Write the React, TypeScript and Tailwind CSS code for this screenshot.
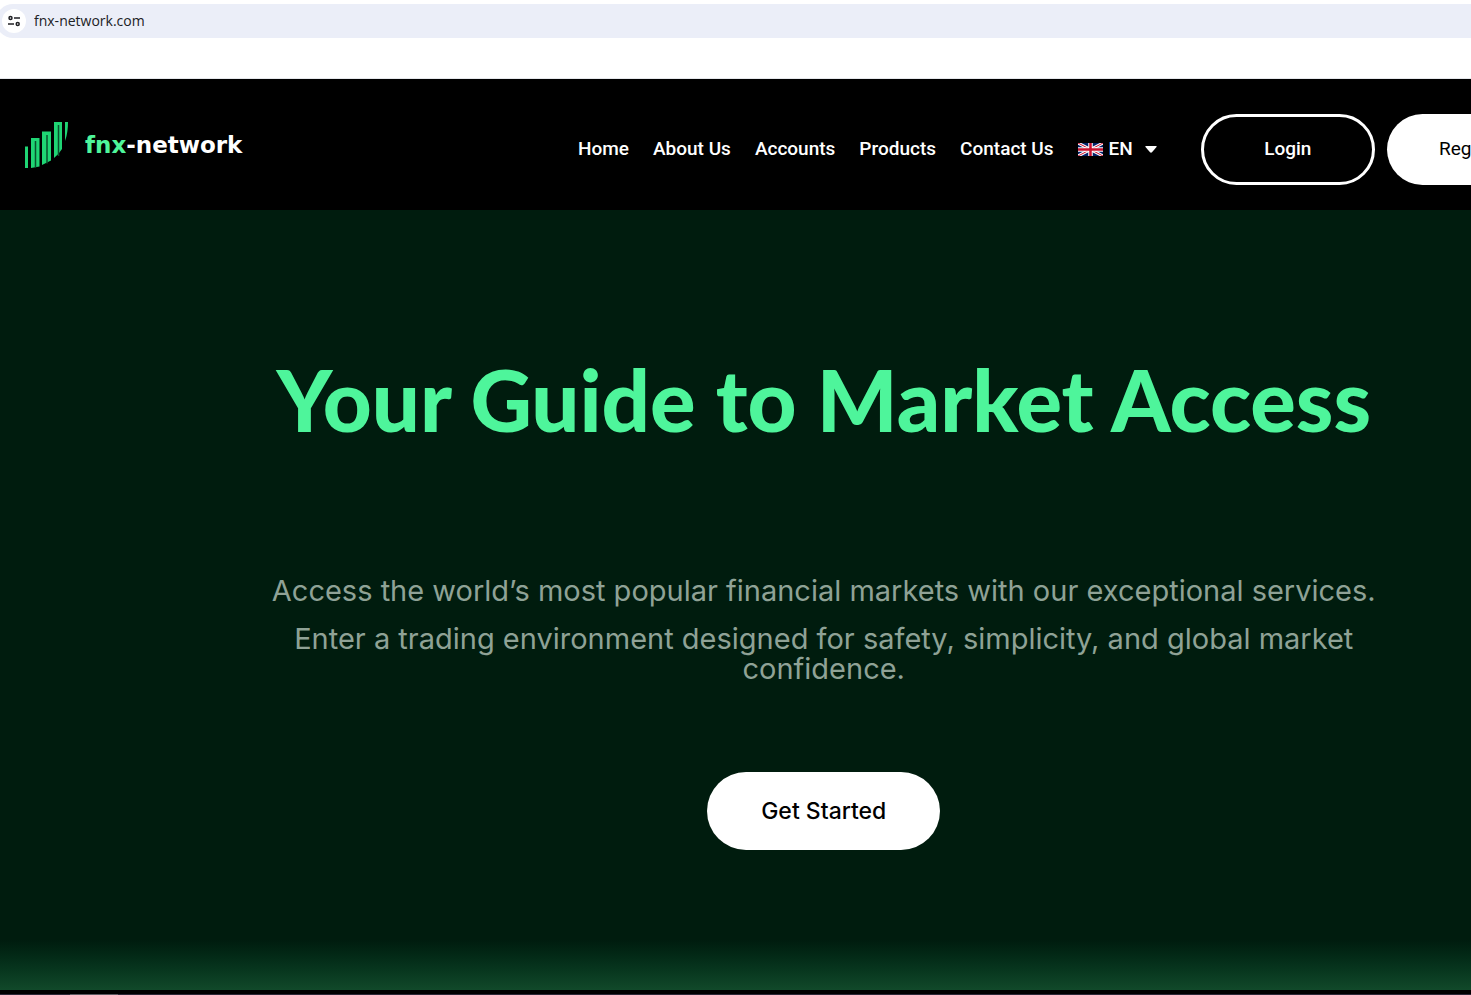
const NAV_LINKS = ["Home", "About Us", "Accounts", "Products", "Contact Us"];

export default function App() {
  return (
    <div className="flex min-h-screen flex-col overflow-hidden bg-white">
      <AddressBar />
      <div className="flex w-[112%] flex-1 flex-col">
        <Header />
        <Hero />
      </div>
      <BottomStrip />
    </div>
  );
}

function AddressBar() {
  return (
    <div className="-ml-1 border-b border-gray-200 pt-1 pb-10">
      <div className="flex h-[34px] items-center gap-2 rounded-l-full bg-[#ebeef8] pl-1.5">
        <button
          aria-label="View site information"
          className="flex size-6 items-center justify-center rounded-full bg-white"
        >
          <SiteInfoIcon />
        </button>
        <input
          aria-label="Address"
          defaultValue="fnx-network.com"
          className="flex-1 bg-transparent font-['Open_Sans',sans-serif] text-sm text-[#202124] outline-none"
        />
      </div>
    </div>
  );
}

function Header() {
  return (
    <header className="flex h-[131px] items-center bg-black pt-2.5 pl-6 font-['Roboto',sans-serif] text-[19px] font-medium text-white">
      <a href="#" className="mb-2.5 flex w-[554px] items-center gap-4">
        <Logo />
        <span className="pt-0.5 font-['DejaVu_Sans',sans-serif] text-[23px] font-bold">
          <span className="text-[#4ef59b]">fnx</span>-network
        </span>
      </a>
      <nav className="flex items-center gap-6 whitespace-nowrap">
        {NAV_LINKS.map((label) => (
          <a key={label} href="#">
            {label}
          </a>
        ))}
        <button className="flex items-center gap-1.5">
          <Flag />
          EN
          <svg viewBox="0 0 12 7" className="ml-1.5 h-[7px] w-3" fill="currentColor">
            <path d="M1 0h10q1.300 0 .5 1L7 6.300q-1 .9-2 0L.5 1Q-.3 0 1 0z" />
          </svg>
        </button>
      </nav>
      <div className="ml-11 flex gap-3">
        <button className="h-[71px] w-[174px] rounded-full border-3 border-white">Login</button>
        <button className="h-[71px] w-[174px] rounded-full bg-white font-normal text-black">Register</button>
      </div>
    </header>
  );
}

function Hero() {
  return (
    <main className="flex flex-1 flex-col items-center bg-[#001c0e] text-center">
      <h1 className="mt-[133px] font-['Lato',sans-serif] text-[85px] leading-[112px] font-black whitespace-nowrap text-[#4ef59b]">
        Your Guide to Market Access
      </h1>
      <div className="mt-[121px] flex w-[1140px] flex-col gap-[18px] font-['Inter',sans-serif] text-[29px] leading-[30px] text-[#8fa296]">
        <p>Access the world’s most popular financial markets with our exceptional services.</p>
        <p>Enter a trading environment designed for safety, simplicity, and global market confidence.</p>
      </div>
      <button className="mt-[88px] h-[78px] w-[233px] rounded-full bg-white font-['Inter',sans-serif] text-[23px] font-medium text-black">
        Get Started
      </button>
      <div className="mt-auto h-[50px] w-full bg-linear-to-b from-[#001c0e] to-[#11492a]" />
    </main>
  );
}

function BottomStrip() {
  return (
    <div className="bg-black pt-1">
      <div className="h-px bg-[#2c2838] pl-[70px]">
        <div className="h-px w-12 bg-[#5c5a62]" />
      </div>
    </div>
  );
}

function SiteInfoIcon() {
  return (
    <svg viewBox="0 0 12 12" className="size-3" fill="none" stroke="#202124" strokeWidth="1.500">
      <circle cx="2.500" cy="3" r="1.500" />
      <path d="M6 3h6M0 9h6" />
      <circle cx="9.700" cy="9" r="1.500" />
    </svg>
  );
}

function Logo() {
  return (
    <svg viewBox="0 0 45 48" className="h-12 w-[45px]">
      <g fill="#1fd574">
        <path d="M1 25.500h3V47H1z" />
        <path d="M7 17h8.500v28.500L7 47z" />
        <path d="M18 10.500h9v29L18 44z" />
        <path d="M30 1h8v27q-3 5-8 9z" />
        <path d="M41 1h3q0 11-3 19z" />
      </g>
      <path d="M11.500 20v26.500M23 14v28.500M34.500 4v31" stroke="#08522c" strokeWidth="1.500" />
    </svg>
  );
}

function Flag() {
  return (
    <svg viewBox="0 0 50 26" className="h-[13px] w-[25px]">
      <path fill="#012169" d="M0 0h50v26H0z" />
      <path stroke="#fff" strokeWidth="6" d="M0 0l50 26M50 0L0 26" />
      <path stroke="#c8102e" strokeWidth="2" d="M0 0l50 26M50 0L0 26" />
      <path stroke="#fff" strokeWidth="9" d="M25 0v26M0 13h50" />
      <path stroke="#c8102e" strokeWidth="5" d="M25 0v26M0 13h50" />
    </svg>
  );
}
